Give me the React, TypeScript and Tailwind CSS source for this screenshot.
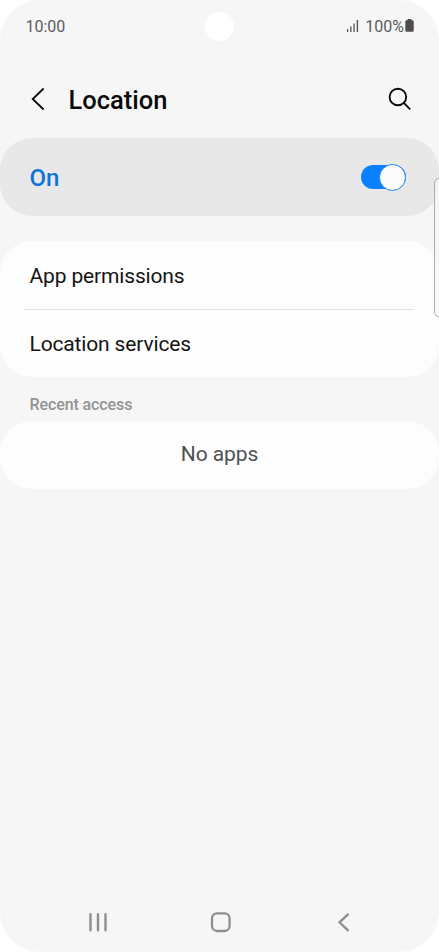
function StatusBar() {
  return (
    <div className="relative flex h-[52px] shrink-0 items-center justify-between pl-[25.5px] pr-[25px] text-[16px] text-[#5c5c5c]">
      <span className="pt-[2px]">10:00</span>
      <div className="absolute left-[205px] top-[12px] size-[29px] rounded-full bg-white" />
      <div className="flex items-center">
        <svg width="12" height="14" viewBox="0 0 12 14" fill="#555555" className="mr-[6px]">
          <rect x="0" y="10" width="1.2" height="3" />
          <rect x="3.2" y="7.5" width="1.3" height="5.5" />
          <rect x="6.4" y="4.5" width="1.3" height="8.5" />
          <rect x="9.7" y="1" width="1.4" height="12" />
        </svg>
        <span className="mr-[1px] pt-[2px]">100%</span>
        <svg width="9" height="13" viewBox="0 0 9 13" fill="#4d4d4d" className="-mt-px">
          <path d="M2.6 0h3.8v1.2H7.5Q8.7 1.2 8.7 2.4v9.2q0 1.2-1.2 1.2h-6Q.3 12.8.3 11.6V2.4Q.3 1.2 1.5 1.2h1.1z" />
        </svg>
      </div>
    </div>
  );
}

function Header() {
  return (
    <header className="flex h-[86px] shrink-0 items-center pl-[31px] pr-[27px] pt-[8px]">
      <svg width="14" height="24" viewBox="0 0 14 24" fill="none" stroke="#0a0a0a" strokeWidth="1.8">
        <path d="M12.6 1.5 1.7 12l10.9 10.5" />
      </svg>
      <h1 className="ml-[23.5px] flex-1 pt-[2px] text-[25.5px] font-medium text-[#0a0a0a]">Location</h1>
      <svg width="24" height="24" viewBox="0 0 24 24" fill="none" stroke="#0a0a0a" strokeWidth="1.9">
        <circle cx="9.9" cy="10" r="8.3" />
        <path d="m15.8 15.9 6.4 6.4" />
      </svg>
    </header>
  );
}

function NavBar() {
  return (
    <nav className="mt-auto flex h-[60px] shrink-0 items-center pl-[88px]">
      <svg width="20" height="20" viewBox="0 0 20 20" stroke="#8f8f8f" strokeWidth="2.4" strokeLinecap="round">
        <path d="M2.5 2.3v16M10 2.3v16M17.5 2.3v16" />
      </svg>
      <svg width="22" height="22" viewBox="0 0 22 22" fill="none" stroke="#8f8f8f" strokeWidth="2.3" className="ml-[102px]">
        <rect x="2" y="2.4" width="17.6" height="17.6" rx="5" />
      </svg>
      <svg width="14" height="20" viewBox="0 0 14 20" fill="none" stroke="#8f8f8f" strokeWidth="2.3" className="ml-[105px]">
        <path d="M11.5 1.8 2.5 10.3l9 8.5" />
      </svg>
    </nav>
  );
}

export default function App() {
  return (
    <div className="h-[952px] w-[439px] overflow-hidden bg-white font-['Roboto','Liberation_Sans',sans-serif]">
      <div className="relative flex h-full w-full flex-col overflow-hidden rounded-[40px] bg-[#f6f6f6]">
        <StatusBar />
        <Header />
        <section className="flex h-[78px] shrink-0 items-center justify-between rounded-[32px] bg-[#e8e8e8] pl-[29.5px] pr-[33px]">
          <span className="pt-[2px] text-[24px] font-medium text-[#0f74da]">On</span>
          <div className="flex h-[24px] w-[45px] items-center justify-end rounded-full bg-[#0a80ff]">
            <div className="-my-[2px] size-[27px] shrink-0 rounded-full border border-[#2385e5] bg-[#fcfcfc]" />
          </div>
        </section>
        <section className="mt-[24.5px] flex h-[136.5px] shrink-0 flex-col rounded-[32px] bg-[#fdfdfd] text-[21px] tracking-[-0.15px] text-[#141414]">
          <div className="flex h-[68.5px] items-center pl-[29.5px] pt-[4px]">App permissions</div>
          <div className="ml-[24px] mr-[25px] h-px bg-[#e2e2e2]" />
          <div className="flex flex-1 items-center pl-[29.5px] pt-[2px]">Location services</div>
        </section>
        <h2 className="flex h-[44px] shrink-0 items-center pl-[29.5px] pt-[12px] text-[16px] font-medium tracking-[-0.1px] text-[#929292]">
          Recent access
        </h2>
        <section className="flex h-[68px] shrink-0 items-center justify-center rounded-[32px] bg-[#fdfdfd] text-[21px] tracking-[-0.1px] text-[#505050]">
          No apps
        </section>
        <NavBar />
        <div className="absolute left-[434px] top-[178px] h-[139px] w-[12px] rounded-[5px] border border-[#adadad] bg-[#f6f6f6]/70" />
      </div>
    </div>
  );
}
